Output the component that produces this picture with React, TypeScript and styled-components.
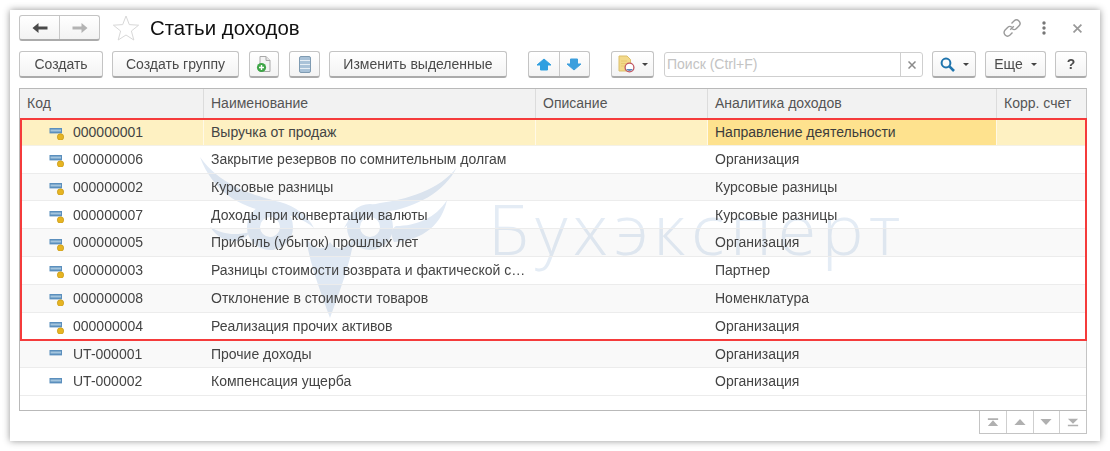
import React from "react";
import styled, { createGlobalStyle } from "styled-components";

const Global = createGlobalStyle`
  html, body { margin: 0; padding: 0; background: #fff; }
  body { font-family: "Liberation Sans", Arial, sans-serif; }
`;

const Page = styled.div`
  width: 1110px;
  height: 451px;
  padding: 10px;
  box-sizing: border-box;
  overflow: hidden;
`;

const Window = styled.div`
  width: 1090px;
  height: 431px;
  box-sizing: border-box;
  padding: 5px 13px 0 9px;
  background: #fff;
  box-shadow: 0 0 7px rgba(0, 0, 0, 0.42);
  display: flex;
  flex-direction: column;
  filter: blur(0.3px);
`;

const TitleRow = styled.div`
  height: 26px;
  display: flex;
  align-items: center;
`;

const Title = styled.h1`
  margin: 0 0 0 10px;
  font-size: 20.4px;
  line-height: 26px;
  font-weight: 400;
  color: #111;
`;

const WindowTools = styled.div`
  margin-left: auto;
  display: flex;
  align-items: center;
  height: 26px;
  padding-right: 5px;
`;

const Toolbar = styled.div`
  margin-top: 10px;
  height: 27px;
  display: flex;
  align-items: stretch;
`;

const Btn = styled.button<{ $w: number; $gap?: number; $inner?: number; $bold?: boolean }>`
  width: ${(p) => p.$w}px;
  margin-left: ${(p) => p.$gap ?? 0}px;
  box-sizing: border-box;
  padding: 0;
  display: flex;
  align-items: center;
  justify-content: center;
  gap: ${(p) => p.$inner ?? 7}px;
  font: ${(p) => (p.$bold ? 700 : 400)} 14px "Liberation Sans", Arial, sans-serif;
  color: #4b4b4b;
  background: linear-gradient(#ffffff, #f3f3f3);
  border: 1px solid #c4c4c4;
  border-bottom: 2px solid #ababab;
  border-radius: 3px;
`;

const Group = styled.div<{ $w: number; $gap?: number; $h?: number }>`
  width: ${(p) => p.$w}px;
  margin-left: ${(p) => p.$gap ?? 0}px;
  ${(p) => (p.$h ? `height: ${p.$h}px;` : "")}
  box-sizing: border-box;
  display: flex;
  background: linear-gradient(#ffffff, #f3f3f3);
  border: 1px solid #c4c4c4;
  border-bottom: 2px solid #ababab;
  border-radius: 3px;
`;

const GroupCell = styled.div<{ $sep?: boolean }>`
  flex: 1;
  display: flex;
  align-items: center;
  justify-content: center;
  ${(p) => (p.$sep ? "border-left: 1px solid #c8c8c8;" : "")}
`;

const Caret = styled.span`
  width: 0;
  height: 0;
  border-left: 3px solid transparent;
  border-right: 3px solid transparent;
  border-top: 3px solid #444;
  margin-top: 1px;
`;

const Search = styled.div`
  width: 259px;
  height: 25px;
  margin: 1px 0 0 10px;
  box-sizing: border-box;
  display: flex;
  background: #fff;
  border: 1px solid #cfcfcf;
  border-radius: 3px;
`;

const SearchText = styled.div`
  flex: 1;
  padding-left: 2px;
  font-size: 14px;
  line-height: 23px;
  color: #c3c3c3;
`;

const SearchClear = styled.div`
  width: 21px;
  border-left: 1px solid #cfcfcf;
  display: flex;
  align-items: center;
  justify-content: center;
`;

const Table = styled.div`
  position: relative;
  margin-top: 10px;
  height: 323px;
  box-sizing: border-box;
  border: 1px solid #b9b9b9;
  border-right-color: #c4c4c4;
`;

const Header = styled.div`
  height: 29px;
  box-sizing: border-box;
  display: grid;
  grid-template-columns: 183px 332px 172px 289px 90px;
  background: #f2f2f2;
`;

const HeadCell = styled.div`
  padding-left: 7px;
  font-size: 14px;
  line-height: 29px;
  color: #555;
  border-left: 1px solid #dcdcdc;
  &:first-child { border-left: 0; }
`;

const Body = styled.div`
  position: relative;
`;

const Row = styled.div<{ $alt?: boolean; $sel?: boolean }>`
  position: relative;
  z-index: 1;
  height: 27.8px;
  box-sizing: border-box;
  display: grid;
  grid-template-columns: 183px 332px 172px 289px 90px;
  border-bottom: 1.4px solid #ececec;
  background: ${(p) => (p.$sel ? "#fef1c2" : p.$alt ? "rgba(0,0,0,0.022)" : "transparent")};
  ${(p) => (p.$sel ? "border-bottom-color:#f4f1e6; border-top:2px solid #fef1c2;" : "")}
`;

const Cell = styled.div<{ $cur?: boolean; $sel?: boolean }>`
  padding-left: 8px;
  font-size: 14px;
  line-height: 26.4px;
  color: #444;
  white-space: nowrap;
  overflow: hidden;
  display: flex;
  align-items: center;
  ${(p) => (p.$sel ? "box-shadow: inset 1px 0 0 #fff9e6;" : "")}
  ${(p) => (p.$cur ? "background:#fee28e; color:#3c3c3c;" : "")}
`;

const CodeCell = styled(Cell)`
  padding-left: 29px;
  gap: 9px;
  box-shadow: none;
`;

const Watermark = styled.div`
  position: absolute;
  left: 170px;
  top: 32px;
  z-index: 0;
  pointer-events: none;
`;

const WatermarkText = styled.div`
  position: absolute;
  left: 298px;
  top: 38px;
  font-family: "Open Sans", "Liberation Sans", sans-serif;
  font-weight: 300;
  font-size: 70px;
  line-height: 80px;
  letter-spacing: 5.6px;
  color: #e4ecf5;
  white-space: nowrap;
`;

const Marker = styled.div`
  position: absolute;
  z-index: 3;
  left: 0;
  right: -1px;
  top: 29px;
  height: 223px;
  box-sizing: border-box;
  border: 2px solid #f53b3b;
  pointer-events: none;
`;

const Pager = styled.div`
  align-self: flex-end;
  width: 108px;
  height: 23px;
  box-sizing: border-box;
  display: flex;
  border: 1px solid #c4c4c4;
  border-top: 0;
`;

const PagerCell = styled.div`
  flex: 1;
  display: flex;
  align-items: center;
  justify-content: center;
  border-left: 1px solid #cfcfcf;
  &:first-child { border-left: 0; }
`;

const ArrowL = () => (
  <svg width="16" height="12" viewBox="0 0 16 12">
    <path d="M0.5 6 L6.5 1 V4.4 H15.5 V7.6 H6.5 V11 Z" fill="#4a4a4a" />
  </svg>
);
const ArrowR = () => (
  <svg width="16" height="12" viewBox="0 0 16 12">
    <path d="M15.5 6 L9.5 1 V4.4 H0.5 V7.6 H9.5 V11 Z" fill="#b3b3b3" />
  </svg>
);
const Star = () => (
  <svg width="28" height="28" viewBox="0 0 28 28" style={{ marginLeft: 12 }}>
    <path
      d="M14 2 L17.3 10.6 L26.6 11.2 L19.4 17 L21.8 26 L14 21 L6.2 26 L8.6 17 L1.4 11.2 L10.7 10.6 Z"
      fill="#fff"
      stroke="#d8d8d8"
      strokeWidth="1"
    />
  </svg>
);
const LinkIcon = () => (
  <svg width="20" height="20" viewBox="0 0 20 20" fill="none" stroke="#9a9a9a" strokeWidth="1.4" style={{ marginRight: 19 }}>
    <path d="M8.2 11.8 L11.8 8.2" />
    <path d="M9.5 5.5 L12 3 C13.4 1.7 15.6 1.7 16.9 3 C18.3 4.4 18.3 6.6 16.9 8 L14.4 10.5 C13.2 11.7 11.4 11.8 10.2 10.8" />
    <path d="M10.5 14.5 L8 17 C6.6 18.3 4.4 18.3 3.1 17 C1.7 15.6 1.7 13.4 3.1 12 L5.6 9.5 C6.8 8.3 8.6 8.2 9.8 9.2" />
  </svg>
);
const Kebab = () => (
  <svg width="6" height="14" viewBox="0 0 6 14" style={{ marginRight: 26 }}>
    <circle cx="3" cy="2" r="1.7" fill="#777" />
    <circle cx="3" cy="7" r="1.7" fill="#777" />
    <circle cx="3" cy="12" r="1.7" fill="#777" />
  </svg>
);
const Cross = ({ size = 8, color = "#999", w = 1.5 }: { size?: number; color?: string; w?: number }) => (
  <svg width={size} height={size} viewBox="0 0 8 8" stroke={color} strokeWidth={w}>
    <path d="M0.5 0.5 L7.5 7.5 M7.5 0.5 L0.5 7.5" />
  </svg>
);
const AddDoc = () => (
  <svg width="16" height="18" viewBox="0 0 16 18">
    <path d="M4 1.5 H10 L14 5.5 V16.5 H4 Z" fill="#f4f4f4" stroke="#a9a9a9" />
    <path d="M10 1.5 V5.5 H14" fill="#e4e4e4" stroke="#a9a9a9" />
    <circle cx="5.5" cy="12.5" r="4.6" fill="#3fa648" />
    <path d="M3 12.5 H8 M5.5 10 V15" stroke="#fff" strokeWidth="1.4" />
  </svg>
);
const ListIcon = () => (
  <svg width="12" height="17" viewBox="0 0 12 17">
    <rect x="0.5" y="0.5" width="11" height="16" rx="1.5" fill="#a9c2d8" stroke="#7f9bb2" />
    <path d="M1 4.5 H11 M1 8.5 H11 M1 12.5 H11" stroke="#e6eef5" strokeWidth="1" />
  </svg>
);
const UpIcon = () => (
  <svg width="16" height="13" viewBox="0 0 16 13">
    <path d="M8 1 L15 7 H11.5 V12 H4.5 V7 H1 Z" fill="#2f9fe0" stroke="#2f9fe0" strokeLinejoin="round" />
  </svg>
);
const DownIcon = () => (
  <svg width="16" height="13" viewBox="0 0 16 13">
    <path d="M8 12 L15 6 H11.5 V1 H4.5 V6 H1 Z" fill="#3d9fdd" stroke="#3d9fdd" strokeLinejoin="round" />
  </svg>
);
const ReportIcon = () => (
  <svg width="17" height="18" viewBox="0 0 17 18">
    <path d="M1 1 H9 L12.5 4.5 V16 H1 Z" fill="#f3d98a" stroke="#dcbf6b" />
    <path d="M3 6 H9 M3 8.5 H8 M3 11 H7" stroke="#e8c970" />
    <circle cx="11.5" cy="12.5" r="4.4" fill="#fff" stroke="#c0545f" strokeWidth="1.3" />
    <path d="M8 14 A4 4 0 0 0 15 14 Z" fill="#5f86bd" />
  </svg>
);
const SearchIcon = () => (
  <svg width="15" height="15" viewBox="0 0 15 15" fill="none" stroke="#1f74ad" strokeWidth="2">
    <circle cx="6" cy="6" r="4.4" />
    <path d="M9.4 9.4 L14 14" strokeWidth="2.6" />
  </svg>
);
const BarIcon = ({ dot }: { dot?: boolean }) => (
  <svg width="15" height="16" viewBox="0 0 15 16" style={{ flex: "none" }}>
    <rect x="0.5" y="4" width="12.5" height="5.4" fill="#5b8fbd" />
    <rect x="1.5" y="5.5" width="10.5" height="2" fill="#a4c5de" />
    {dot && <circle cx="11.5" cy="13" r="3.2" fill="#e6b422" stroke="#c79a18" strokeWidth="0.7" />}
  </svg>
);
const PagerIcon = ({ kind }: { kind: "first" | "up" | "down" | "last" }) => (
  <svg width="12" height="9" viewBox="0 0 14 10" fill="#b0b0b0">
    {kind === "first" && <path d="M1 0 H13 V2 H1 Z M7 2.4 L13 9 H1 Z" />}
    {kind === "up" && <path d="M7 1 L13.5 8 H0.5 Z" />}
    {kind === "down" && <path d="M7 8 L13.5 1 H0.5 Z" />}
    {kind === "last" && <path d="M7 6.6 L13 0.5 H1 Z M1 7.5 H13 V9.5 H1 Z" />}
  </svg>
);

const Owl = () => (
  <svg width="280" height="185" viewBox="0 0 280 185" fill="#e0e9f4">
    <path d="M10 7 C30 35 62 45 90 52 C105 56 118 66 124 78 C112 68 98 64 80 62 C50 58 22 40 10 7 Z" />
    <path d="M267 17 C250 40 215 50 190 53 C172 56 160 66 154 78 C165 68 180 64 195 62 C225 58 255 42 267 17 Z" />
    <path d="M20 77 C32 84 44 86 60 82 C50 96 32 94 20 77 Z" />
    <path d="M257 50 C252 74 234 90 204 92 C200 84 202 78 206 76 C226 76 246 68 257 50 Z" />
    <circle cx="80" cy="77" r="16.5" fill="none" stroke="#e0e9f4" strokeWidth="13" />
    <circle cx="180" cy="77" r="16.5" fill="none" stroke="#e0e9f4" strokeWidth="13" />
    <path d="M116 88 C124 100 134 102 140 92 C146 102 156 100 164 88 C160 115 150 140 140 168 C130 140 120 115 116 88 Z" />
  </svg>
);

const rows: { code: string; name: string; an: string; dot: boolean }[] = [
  { code: "000000001", name: "Выручка от продаж", an: "Направление деятельности", dot: true },
  { code: "000000006", name: "Закрытие резервов по сомнительным долгам", an: "Организация", dot: true },
  { code: "000000002", name: "Курсовые разницы", an: "Курсовые разницы", dot: true },
  { code: "000000007", name: "Доходы при конвертации валюты", an: "Курсовые разницы", dot: true },
  { code: "000000005", name: "Прибыль (убыток) прошлых лет", an: "Организация", dot: true },
  { code: "000000003", name: "Разницы стоимости возврата и фактической с…", an: "Партнер", dot: true },
  { code: "000000008", name: "Отклонение в стоимости товаров", an: "Номенклатура", dot: true },
  { code: "000000004", name: "Реализация прочих активов", an: "Организация", dot: true },
  { code: "UT-000001", name: "Прочие доходы", an: "Организация", dot: false },
  { code: "UT-000002", name: "Компенсация ущерба", an: "Организация", dot: false },
];

export default function App() {
  return (
    <Page>
      <Global />
      <Window>
        <TitleRow>
          <Group $w={81} $h={26}>
            <GroupCell><ArrowL /></GroupCell>
            <GroupCell $sep><ArrowR /></GroupCell>
          </Group>
          <Star />
          <Title>Статьи доходов</Title>
          <WindowTools>
            <LinkIcon />
            <Kebab />
            <Cross size={9} color="#999" />
          </WindowTools>
        </TitleRow>
        <Toolbar>
          <Btn $w={84}>Создать</Btn>
          <Btn $w={127} $gap={9}>Создать группу</Btn>
          <Btn $w={30} $gap={10}><AddDoc /></Btn>
          <Btn $w={31} $gap={10}><ListIcon /></Btn>
          <Btn $w={178} $gap={9}>Изменить выделенные</Btn>
          <Group $w={62} $gap={21}>
            <GroupCell><UpIcon /></GroupCell>
            <GroupCell $sep><DownIcon /></GroupCell>
          </Group>
          <Btn $w={43} $gap={21}><ReportIcon /><Caret /></Btn>
          <Search>
            <SearchText>Поиск (Ctrl+F)</SearchText>
            <SearchClear><Cross size={8} color="#8a8a8a" /></SearchClear>
          </Search>
          <Btn $w={44} $gap={9} $inner={8}><SearchIcon /><Caret /></Btn>
          <Btn $w={61} $gap={9} $inner={8}>Еще<Caret /></Btn>
          <Btn $w={32} $gap={9} $bold>?</Btn>
        </Toolbar>
        <Table>
          <Header>
            <HeadCell>Код</HeadCell>
            <HeadCell>Наименование</HeadCell>
            <HeadCell>Описание</HeadCell>
            <HeadCell>Аналитика доходов</HeadCell>
            <HeadCell>Корр. счет</HeadCell>
          </Header>
          <Body>
            <Watermark>
              <Owl />
              <WatermarkText>Бухэксперт</WatermarkText>
            </Watermark>
            {rows.map((r, i) => {
              const sel = i === 0;
              return (
                <Row key={r.code} $sel={sel} $alt={i % 2 === 0}>
                  <CodeCell $sel={sel}><BarIcon dot={r.dot} />{r.code}</CodeCell>
                  <Cell $sel={sel}>{r.name}</Cell>
                  <Cell $sel={sel} />
                  <Cell $sel={sel} $cur={sel}>{r.an}</Cell>
                  <Cell $sel={sel} />
                </Row>
              );
            })}
          </Body>
          <Marker />
        </Table>
        <Pager>
          <PagerCell><PagerIcon kind="first" /></PagerCell>
          <PagerCell><PagerIcon kind="up" /></PagerCell>
          <PagerCell><PagerIcon kind="down" /></PagerCell>
          <PagerCell><PagerIcon kind="last" /></PagerCell>
        </Pager>
      </Window>
    </Page>
  );
}
